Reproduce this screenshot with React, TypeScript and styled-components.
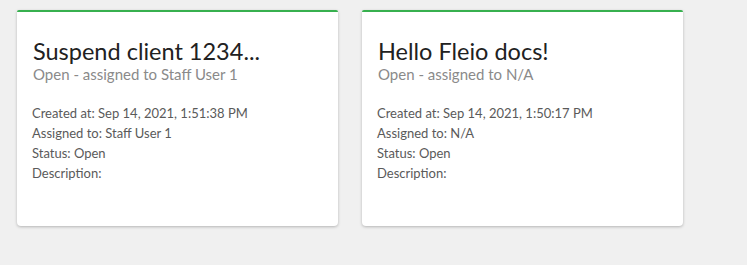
import React from 'react';
import styled, { createGlobalStyle } from 'styled-components';

const GlobalStyle = createGlobalStyle`
  html, body {
    margin: 0;
    padding: 0;
    background: #f0f0f0;
  }
  body {
    font-family: Lato, 'Liberation Sans', Arial, sans-serif;
  }
`;

const SCGrid = styled.div`
  display: flex;
  gap: 24px;
  padding: 10px 17px;
`;

const SCCard = styled.div`
  width: 321px;
  height: 216px;
  box-sizing: border-box;
  background: #fff;
  border-top: 2px solid #37b04f;
  border-radius: 2px 2px 4px 4px;
  box-shadow: 0 1px 3px rgba(0, 0, 0, 0.25);
  padding: 26px 16px 16px;
`;

const SCTitle = styled.h2`
  margin: 0;
  font-weight: 400;
  font-size: 23.5px;
  line-height: 27px;
  color: #212121;
  white-space: nowrap;
  overflow: hidden;
  text-overflow: ellipsis;
`;

const SCSubTitle = styled.p`
  margin: -1px 0 19px;
  font-size: 15px;
  line-height: 20px;
  color: #8a8a8a;
`;

const SCLine = styled.div`
  font-size: 13px;
  line-height: 20px;
  color: #5a5a5a;
  margin-left: -1px;
`;

interface ITicket {
  title: string;
  assignee: string;
  created: string;
  status: string;
}

const tickets: ITicket[] = [
  { title: 'Suspend client 1234...', assignee: 'Staff User 1', created: 'Sep 14, 2021, 1:51:38 PM', status: 'Open' },
  { title: 'Hello Fleio docs!', assignee: 'N/A', created: 'Sep 14, 2021, 1:50:17 PM', status: 'Open' },
];

const TicketCard = (props: ITicket) => (
  <SCCard>
    <SCTitle>{props.title}</SCTitle>
    <SCSubTitle>
      {props.status} - assigned to {props.assignee}
    </SCSubTitle>
    <SCLine>Created at: {props.created}</SCLine>
    <SCLine>Assigned to: {props.assignee}</SCLine>
    <SCLine>Status: {props.status}</SCLine>
    <SCLine>Description:</SCLine>
  </SCCard>
);

const App = () => (
  <>
    <GlobalStyle />
    <SCGrid>
      {tickets.map((t) => (
        <TicketCard key={t.title} {...t} />
      ))}
    </SCGrid>
  </>
);

export default App;
